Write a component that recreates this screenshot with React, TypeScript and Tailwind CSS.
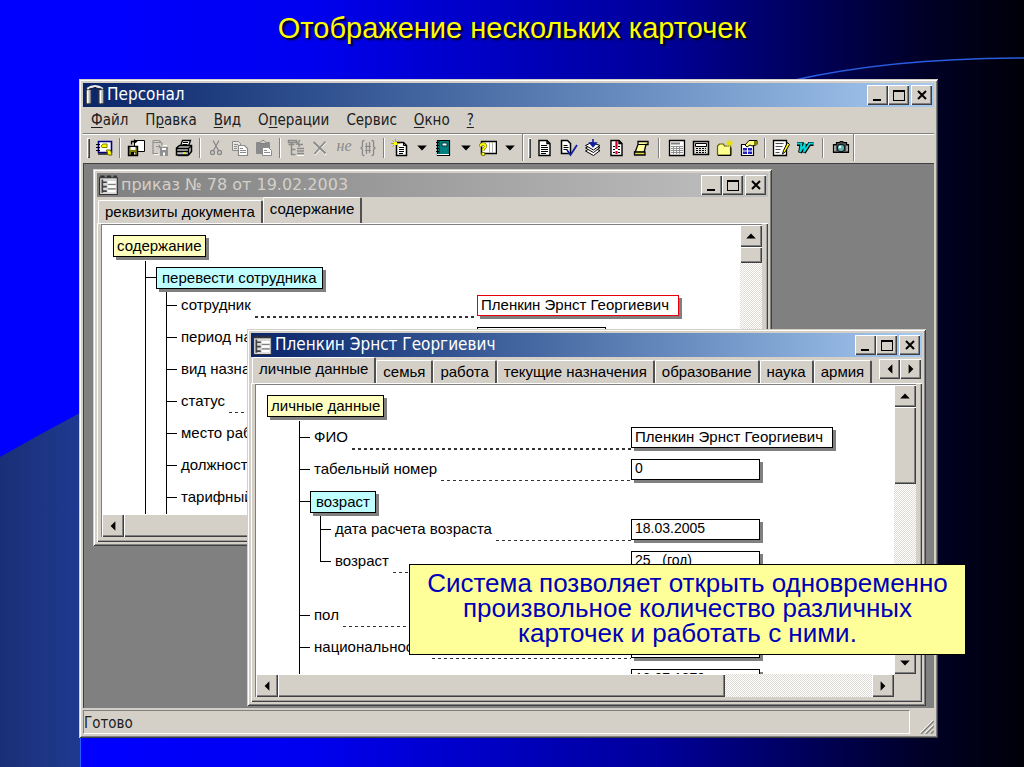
import React from "react";

const raised =
  "bg-[#d4d0c8] shadow-[inset_1px_1px_#fff,inset_-1px_-1px_#404040,inset_-2px_-2px_#808080]";
const frame =
  "bg-[#d4d0c8] shadow-[inset_1px_1px_#d4d0c8,inset_-1px_-1px_#404040,inset_2px_2px_#fff,inset_-2px_-2px_#808080]";
const dither =
  "bg-[repeating-conic-gradient(#fff_0_25%,#dedbd4_0_50%)] bg-[length:2px_2px]";
const uiFont = "font-['DejaVu_Sans_Condensed','DejaVu_Sans',sans-serif]";
const formFont = "font-['Liberation_Sans',sans-serif]";

/* ---------- icons ---------- */

type IconProps = { children: React.ReactNode; size?: string };

const Icon = ({ children, size = "size-[18px]" }: IconProps) => (
  <svg viewBox="0 0 18 18" className={`${size} shrink-0`} fill="none" aria-hidden="true">
    {children}
  </svg>
);

const Page = ({ x = 3, c = "#000" }: { x?: number; c?: string }) => (
  <path d={`M${x} 1.5h8l3 3v12h-11z M${x + 8} 1.5v3h3`} fill="#fff" stroke={c} strokeWidth="1.4" />
);

const icons: Record<string, React.ReactNode> = {
  card: (
    <>
      <path d="M3.5 2.5h13v11h-13z" fill="#fff" stroke="#000080" strokeWidth="1.6" />
      <path d="M3 15h11" stroke="#000" strokeWidth="1.300" />
      <path d="M1 5.500h4M1 8.500h4M1 11.500h4" stroke="#000" />
      <path d="M6 7l2-2h4v3.500H7z" fill="#ff0" stroke="#808000" />
      <path d="M11.500 11h4l1.500 5h-4z" fill="#ff0" stroke="#606000" />
    </>
  ),
  saveClose: (
    <>
      <path d="M7.500 1.500h10v11h-10z" fill="#fff" stroke="#000" />
      <path d="M4.500 5.500v-3h4M7 .8l2.500 1.700L7 4.200" stroke="#000" strokeWidth="1.3" />
      <path d="M1.500 7.500h9v9h-9z" fill="#808000" stroke="#000" strokeWidth="1.400" />
      <path d="M3.500 8h5v3h-5z" fill="#fff" />
      <path d="M4 13h5v3h-5z" fill="#000" />
      <path d="M7 13.500h1.500v2H7z" fill="#fff" />
    </>
  ),
  moveOff: (
    <>
      <path d="M2 3.500h7v-2M2 1.500h6l3 3v2M2 1.500v13h5" stroke="#909090" strokeWidth="1.200" />
      <path d="M3 15.500h5M12 6.500h4" stroke="#fff" />
      <path d="M9 8h8v9H9z" fill="#909090" />
      <path d="M11 9h4v2h-4zM12 13.500h2v3h-2z" fill="#fff" />
      <path d="M5 7.500h4M7.500 5.500l2 2-2 2" stroke="#909090" />
    </>
  ),
  print: (
    <>
      <path d="M5.500 7l2-5.500h8L13.500 7" fill="#fff" stroke="#000" strokeWidth="1.300" />
      <path d="M8 3.500h5M7.500 5.500h5" stroke="#000" />
      <path d="M1.500 9l3-2.500h12v6l-3 3.500H1.500z" fill="#c0c0c0" stroke="#000" strokeWidth="1.500" />
      <path d="M1.500 9.500h12v6M13.500 9.500l3-3M2 12.500h11" stroke="#000" strokeWidth="1.300" />
      <path d="M8 14h3" stroke="#ff0" strokeWidth="1.300" />
      <path d="M3 16.700h10" stroke="#000" />
    </>
  ),
  cut: (
    <>
      <path d="M6 1.500l5.500 10M12 1.500l-5.500 10" stroke="#8a8a8a" strokeWidth="1.300" />
      <circle cx="5.500" cy="13.500" r="2" stroke="#8a8a8a" strokeWidth="1.300" />
      <circle cx="12.500" cy="13.500" r="2" stroke="#8a8a8a" strokeWidth="1.300" />
    </>
  ),
  copy: (
    <>
      <path d="M1.500 2.500h6l2 2v7h-8z" fill="#e8e6e0" stroke="#8a8a8a" />
      <path d="M7.500 6.500h6l3 3v7h-9z" fill="#fff" stroke="#8a8a8a" strokeWidth="1.200" />
      <path d="M3 5.500h4M3 7.500h3M3 9.500h3M9 9.500h3M9 11.500h6M9 13.500h6" stroke="#8a8a8a" />
    </>
  ),
  paste: (
    <>
      <path d="M1.500 3.500h13v11h-13z" fill="#8a8a8a" stroke="#8a8a8a" />
      <path d="M5 3.500l2-2h2l2 2v1H5z" fill="#d4d0c8" stroke="#808080" />
      <path d="M7.500 8.500h6l3 3v5h-9z" fill="#fff" stroke="#8a8a8a" />
      <path d="M9 11.500h3M9 13.500h6" stroke="#8a8a8a" />
    </>
  ),
  treeAdd: (
    <>
      <path d="M1.500 1.500h8v2h-8zM1.500 5.500h6M4.500 3.500v12h4M4.500 10.500h4" stroke="#8a8a8a" strokeWidth="1.500" />
      <path d="M13 1l-3 4h2v3M11 5.500h5M10 9.500h7M10 12h7M10 14.500h7" stroke="#8a8a8a" strokeWidth="1.400" />
      <path d="M10 16.500h7" stroke="#fff" />
    </>
  ),
  del: (
    <>
      <path d="M3 4l12 12M15 3L4 16" stroke="#fff" strokeWidth="1.500" />
      <path d="M2.500 3l12 11.500M14.500 2.500l-11 12.500" stroke="#8a8a8a" strokeWidth="1.800" />
    </>
  ),
  braces: (
    <>
      <path d="M5.500 1.500c-3 0-2 2-2 4.500 0 2-.5 3-2 3 1.500 0 2 1 2 3 0 2.500-1 4.500 2 4.500" stroke="#8a8a8a" strokeWidth="1.300" />
      <path d="M12.500 1.500c3 0 2 2 2 4.500 0 2 .5 3 2 3-1.500 0-2 1-2 3 0 2.500 1 4.500-2 4.500" stroke="#8a8a8a" strokeWidth="1.300" />
      <path d="M7.500 4v11M10.500 3v11M6 7.500h6M6 11.500h6" stroke="#8a8a8a" strokeWidth="1.200" />
    </>
  ),
  sheet: (
    <>
      <Page />
      <path d="M5 6.500h6M5 8.500h7M5 10.500h7M5 12.500h7M5 14.500h5" stroke="#000" />
    </>
  ),
  newDoc: (
    <>
      <path d="M5.500 3.500h7l3 3v10h-10z" fill="#fff" stroke="#000" strokeWidth="1.500" />
      <path d="M12.500 3.500v3h3M8 8.500h5M8 10.500h5M8 12.500h5M8 14.500h4" stroke="#000" />
      <path d="M4.500 0v9M0 4.500h9M1.500 1.500l6 6M7.500 1.500l-6 6" stroke="#b8a800" />
      <path d="M3 3h3v3H3z" fill="#ff0" />
    </>
  ),
  book: (
    <>
      <path d="M2.500 1.500h12v15h-12z" fill="#008080" stroke="#000" strokeWidth="1.200" />
      <path d="M2 15.500h12" stroke="#fff" />
      <path d="M4.500 2v13" stroke="#004848" />
      <path d="M7 4h5v3H7z" fill="#fff" stroke="#003838" />
      <path d="M1 3.500h3M1 6.500h3M1 9.500h3M1 12.500h3" stroke="#000" />
    </>
  ),
  bookHelp: (
    <>
      <path d="M2.500 2.500h15v12h-15z" fill="#fff" stroke="#000" strokeWidth="1.500" />
      <path d="M10.500 3v11M13.500 3v11" stroke="#b0b0b0" />
      <path d="M1.500 7.500c0-3.500 5-3.500 5 0 0 1.500-2.500 1.500-2.500 4" stroke="#605800" strokeWidth="3" />
      <path d="M1.500 7.500c0-3.500 5-3.500 5 0 0 1.500-2.500 1.500-2.500 4" stroke="#ff0" strokeWidth="2" />
      <path d="M2.700 13.500h3V16.500h-3z" fill="#ff0" stroke="#605800" strokeWidth="0.700" />
    </>
  ),
  sheetCheck: (
    <>
      <path d="M1.500 1.500h6l3 3v10h-9z" fill="#fff" stroke="#000" strokeWidth="1.500" />
      <path d="M3.500 6.500h4M3.500 8.500h5M3.500 10.500h4" stroke="#000" />
      <path d="M7 11l3.500 5L17 6" stroke="#1020a0" strokeWidth="1.800" />
    </>
  ),
  layers: (
    <>
      <path d="M1.500 12l6-3.500 8.500 3-6.500 5z" fill="#fff" stroke="#000" />
      <path d="M1.500 9l6-3.500 8.500 3-6.500 5z" fill="#fff" stroke="#000" />
      <path d="M1.500 6.500l6-3 8.500 3-6.500 4.500z" fill="#fff" stroke="#000" />
      <path d="M9 0v6M6 4l3 3.500L12 4z" fill="#1020a0" stroke="#1020a0" strokeWidth="1.600" />
    </>
  ),
  sheetAlert: (
    <>
      <Page />
      <path d="M5 7.500h2M10 7.500h2M5 10.500h2M10 10.500h2M5 13.500h2M10 13.500h2" stroke="#000" />
      <path d="M8.500 2v8M8.500 12v3" stroke="#d00020" strokeWidth="2.200" />
    </>
  ),
  scroll: (
    <>
      <path d="M6 2.500h10v3h-2l-2 8H3l3-8z" fill="#ffffa0" stroke="#000" strokeWidth="1.300" />
      <path d="M2.500 13h10.500v3H2.500z" fill="#e0d840" stroke="#000" strokeWidth="1.300" />
      <path d="M6 5.500h8" stroke="#000" />
    </>
  ),
  table: (
    <>
      <path d="M1.500 1.500h15v15h-15z" fill="#fff" stroke="#000" strokeWidth="1.300" />
      <path d="M3 4.500h9" stroke="#808080" strokeWidth="2" />
      <path d="M3 7.500h12M3 9.500h12M3 11.500h12M3 13.500h12M5.500 7v8M8.500 7v8M11.500 7v8" stroke="#909090" />
    </>
  ),
  calc: (
    <>
      <path d="M1.500 2.500h15v13h-15z" fill="#e0ded8" stroke="#000" strokeWidth="1.500" />
      <path d="M3.500 4.500h11v3h-11z" fill="#fff" stroke="#000" />
      <path d="M4 9.500h10M4 11.500h10M4 13.500h10" stroke="#000" strokeDasharray="2 1" />
    </>
  ),
  folderNew: (
    <>
      <path d="M1.500 7l2-2h4l1 2h6v9h-13z" fill="#ffff90" stroke="#606000" strokeWidth="1.200" />
      <path d="M2 16.500h13v-8" stroke="#000" />
      <path d="M13.500 0v8M9.500 4h8M11 1.500l5 5M16 1.500l-5 5" stroke="#e8e000" strokeWidth="1.200" />
    </>
  ),
  formHand: (
    <>
      <path d="M1.500 5.500h12v11h-12z" fill="#fff" stroke="#000" strokeWidth="1.200" />
      <path d="M3 9h4v2.500H3zM8 9h4v2.500H8zM3 12.500h4V15H3zM8 12.500h4V15H8z" fill="#2020c0" />
      <path d="M5 6l4-4.500h8v4l-5 1.500-2-1-3 2z" fill="#ffff80" stroke="#000" />
      <path d="M14 2h3v4h-3z" fill="#808000" />
    </>
  ),
  sheetPen: (
    <>
      <path d="M1.500 1.500h13v15h-13z" fill="#fff" stroke="#000" strokeWidth="1.300" />
      <path d="M3.500 4.500h8M3.500 7.500h7M3.500 10.500h5M3.500 13.500h4" stroke="#505050" />
      <path d="M15.500 3.500l-4 8-1 3.500 3-2.500 4-7z" fill="#ff0" stroke="#000" />
    </>
  ),
  word: (
    <>
      <path d="M1 5h4.500l-1.500 8.500 5-8.500-1 8.500 5.500-8.500h4" stroke="#000" strokeWidth="3.800" />
      <path d="M1 4.500h4.500l-1.500 8.500 5-8.500-1 8.500 5.500-8.500h4" stroke="#00d8d8" strokeWidth="1.800" />
    </>
  ),
  camera: (
    <>
      <path d="M1.500 5.500h3v-2h3l1-1h2l1 1h3v2h2v8h-15z" fill="#505050" stroke="#000" strokeWidth="1.200" />
      <path d="M3 7v5M15 7v5" stroke="#c0c0c0" strokeWidth="1.500" />
      <circle cx="9" cy="9" r="3.800" fill="#60b0b0" stroke="#000" />
      <circle cx="8" cy="8" r="1.300" fill="#d0ffff" />
    </>
  ),
  app: (
    <>
      <path d="M1 4h4.500v13H1zM12.500 4H17v13h-4.500z" fill="#b8b8b8" stroke="#303030" />
      <path d="M2.500 5v11.500M14 5v11.500" stroke="#fff" strokeWidth="1.300" />
      <path d="M2 3.500c2-1.500 4-2.500 7-2.500s5 1 7 2.500" stroke="#e8e8e8" strokeWidth="2" />
      <path d="M4 3.500h2M8 2.500h2M12 3.500h3" stroke="#202020" strokeWidth="1.200" />
    </>
  ),
  cardFile: (
    <>
      <path d="M.5 2.500h16v15H.5z" fill="#d8d8d8" stroke="#303030" />
      <path d="M1 1.500h4M7 1.500h4M13 1.500h3" stroke="#303030" strokeWidth="2" />
      <path d="M3 4v12M3 6.500h4M3 10.500h4M3 14.500h4" stroke="#404040" strokeWidth="1.500" />
      <path d="M8 6.500h7M8 10.500h7M8 14.500h7" stroke="#fff" strokeWidth="2" />
      <path d="M8 8.500h7M8 12.500h7" stroke="#808080" />
    </>
  ),
};

const Arrow = ({ dir }: { dir: "up" | "down" | "left" | "right" }) => {
  const d = {
    up: "M1 7h8L5 3z",
    down: "M1 3h8L5 7z",
    left: "M7 1v8L3 5z",
    right: "M3 1v8l4-4z",
  }[dir];
  return (
    <svg viewBox="0 0 10 10" className="size-3 shrink-0" aria-hidden="true">
      <path d={d} fill="#000" />
    </svg>
  );
};

/* ---------- window parts ---------- */

type CaptionProps = { title: string; icon: string; active?: boolean };

const Caption = ({ title, icon, active = true }: CaptionProps) => (
  <div
    className={`flex h-6 shrink-0 items-center pr-0.5 pl-0.5 ${
      active
        ? "bg-linear-to-r from-[#0a246a] to-[#a6caf0] text-white"
        : "bg-linear-to-r from-[#808080] to-[#c0c0c0] text-[#d4d0c8]"
    }`}
  >
    <Icon size="size-5">{icons[icon]}</Icon>
    <h2
      className={`flex-1 truncate pl-0.5 ${
        active ? `text-[17px] ${uiFont}` : "font-['DejaVu_Sans',sans-serif] text-base"
      }`}
    >
      {title}
    </h2>
    <button aria-label="Свернуть" className={`flex h-5 w-[21px] items-end justify-center pb-1 ${raised}`}>
      <span className="mr-0.5 h-0.5 w-2 bg-black" />
    </button>
    <button aria-label="Развернуть" className={`flex h-5 w-[21px] items-center justify-center ${raised}`}>
      <span className="h-[11px] w-3 border border-t-2 border-black" />
    </button>
    <button aria-label="Закрыть" className={`ml-0.5 flex h-5 w-[21px] items-center justify-center ${raised}`}>
      <svg viewBox="0 0 10 10" className="size-2.5" aria-hidden="true">
        <path d="M1 1l8 8M9 1l-8 8" stroke="#000" strokeWidth="2" />
      </svg>
    </button>
  </div>
);

const Tab = ({ label, active }: { label: string; active?: boolean }) => (
  <button
    role="tab"
    aria-selected={!!active}
    className={`whitespace-nowrap rounded-t-xs border-t border-r-2 border-l border-t-white border-r-[#505050] border-l-white bg-[#d4d0c8] px-1.5 text-[15px] ${formFont} ${
      active ? "relative h-[26px] pb-0.5" : "h-[23px]"
    }`}
  >
    {label}
  </button>
);

const VScroll = ({ thumb }: { thumb: string }) => (
  <div className={`flex w-[22px] shrink-0 flex-col ${dither}`}>
    <button aria-label="Вверх" className={`flex h-[22px] items-center justify-center ${raised}`}>
      <Arrow dir="up" />
    </button>
    <div className={`${thumb} ${raised}`} />
    <div className="flex-1" />
    <button aria-label="Вниз" className={`flex h-[22px] items-center justify-center ${raised}`}>
      <Arrow dir="down" />
    </button>
  </div>
);

const HScroll = () => (
  <div className="flex h-[23px] shrink-0 bg-[#d4d0c8] pr-[22px]">
    <div className={`flex flex-1 ${dither}`}>
      <button aria-label="Влево" className={`flex w-[22px] items-center justify-center ${raised}`}>
        <Arrow dir="left" />
      </button>
      <div className={`w-[70%] ${raised}`} />
      <div className="flex-1" />
      <button aria-label="Вправо" className={`flex w-[22px] items-center justify-center ${raised}`}>
        <Arrow dir="right" />
      </button>
    </div>
  </div>
);

type CardProps = {
  title: string;
  active?: boolean;
  place: string;
  tabs: React.ReactNode;
  thumb: string;
  children: React.ReactNode;
};

const CardWindow = ({ title, active, place, tabs, thumb, children }: CardProps) => (
  <section className={`absolute flex h-[377px] w-[679px] flex-col p-1 ${place} ${frame}`}>
    <Caption title={title} icon="cardFile" active={active} />
    <div role="tablist" className="flex h-[26px] shrink-0 items-end pl-px">
      {tabs}
    </div>
    <div className="flex min-h-0 flex-1 flex-col pt-px pr-1.5 pb-[5px] pl-1 shadow-[inset_1px_1px_#fff,inset_-1px_-1px_#404040,inset_-2px_-2px_#a0a0a0]">
      <div className="flex min-h-0 flex-1 flex-col border-t border-l border-[#808080]">
        <div className="flex min-h-0 flex-1">
          <div className="min-w-0 flex-1 overflow-hidden bg-white pt-2.5 pl-[11px]">{children}</div>
          <VScroll thumb={thumb} />
        </div>
        <HScroll />
      </div>
    </div>
  </section>
);

/* ---------- card tree ---------- */

const Node = ({ label, color }: { label: string; color: string }) => (
  <div
    className={`flex h-[22px] w-fit items-center border border-black text-[15px] whitespace-nowrap shadow-[3px_3px_#808080] ${color} ${formFont}`}
  >
    {label}
  </div>
);

const Stub = ({ last }: { last?: boolean }) => (
  <div className="flex w-[11px] shrink-0 flex-col self-stretch">
    <div className="h-[17px] border-b border-l border-black" />
    {!last && <div className="flex-1 border-l border-black" />}
  </div>
);

type RowProps = {
  id: string;
  label?: string;
  hint?: string;
  value?: string;
  wide?: boolean;
  red?: boolean;
  last?: boolean;
};

const Row = ({ id, label, hint, value = "", wide, red, last }: RowProps) => (
  <div className={`flex h-8 ${formFont}`}>
    <Stub last={last} />
    {label && (
      <label htmlFor={id} className="flex items-center pl-1 text-[15px] whitespace-nowrap">
        {label}
      </label>
    )}
    <div
      className={`mt-[27px] ml-1 flex-1 bg-[repeating-linear-gradient(90deg,#333_0_3px,transparent_3px_6px)] ${
        wide ? "h-0.5" : "h-px"
      }`}
    />
    <div className="w-[263px] shrink-0 pt-1.5">
      <input
        id={id}
        readOnly
        aria-label={hint}
        defaultValue={value}
        className={`block h-[21px] border bg-white px-[3px] shadow-[3px_3px_#808080] outline-none ${
          wide ? "w-[202px] text-[15px]" : "w-[129px] pb-[3px] text-sm"
        } ${red ? "border-red-600" : "border-black"}`}
      />
    </div>
  </div>
);

const Group = ({ label, children }: { label: string; children: React.ReactNode }) => (
  <>
    <div className="flex h-7">
      <Stub />
      <div className="pt-1.5">
        <Node label={label} color="relative px-[5px] bg-[#c0ffff]" />
      </div>
    </div>
    <div className="border-l border-black pl-5">{children}</div>
  </>
);

const Root = ({ label, children }: { label: string; children: React.ReactNode }) => (
  <>
    <Node label={label} color="px-[3px] bg-[#ffffc0]" />
    <div className="ml-8 pt-1">{children}</div>
  </>
);

/* ---------- main window ---------- */

const menu = [
  ["", "Ф", "айл"],
  ["П", "р", "авка"],
  ["", "В", "ид"],
  ["О", "п", "ерации"],
  ["Сервис", "", ""],
  ["", "О", "кно"],
  ["", "?", ""],
];

const ToolButton = ({ icon, label }: { icon: string; label: string }) => (
  <button aria-label={label} className="flex h-6 w-6 shrink-0 items-center justify-center">
    <Icon>{icons[icon]}</Icon>
  </button>
);

const DropButton = ({ label }: { label: string }) => (
  <button aria-label={label} className="flex h-6 w-5 shrink-0 items-center justify-center">
    <Arrow dir="down" />
  </button>
);

const Sep = ({ wide }: { wide?: boolean }) => (
  <div className={`flex shrink-0 justify-center ${wide ? "w-3" : "w-2"}`}>
    <div className="h-5 border-r border-l border-r-white border-l-[#808080]" />
  </div>
);

const Grip = () => <div className={`mr-0.5 h-5 w-[3px] shrink-0 ${raised}`} />;

const Toolbar = () => (
  <div className="flex h-[30px] shrink-0 items-center border-t border-[#808080] pb-0.5 pl-1 shadow-[inset_0_1px_#fff]">
    <Grip />
    <ToolButton icon="card" label="Карточка" />
    <Sep />
    <ToolButton icon="saveClose" label="Сохранить и закрыть" />
    <ToolButton icon="moveOff" label="Переместить" />
    <ToolButton icon="print" label="Печать" />
    <Sep />
    <ToolButton icon="cut" label="Вырезать" />
    <ToolButton icon="copy" label="Копировать" />
    <ToolButton icon="paste" label="Вставить" />
    <Sep />
    <ToolButton icon="treeAdd" label="Добавить" />
    <ToolButton icon="del" label="Удалить" />
    <button className="h-6 w-6 shrink-0 pb-1 font-['Liberation_Serif',serif] text-base leading-none text-[#8a8a8a] italic">
      не
    </button>
    <ToolButton icon="braces" label="Скобки" />
    <Sep />
    <ToolButton icon="newDoc" label="Создать" />
    <DropButton label="Создать: список" />
    <ToolButton icon="book" label="Справочник" />
    <DropButton label="Справочник: список" />
    <ToolButton icon="bookHelp" label="Запрос" />
    <DropButton label="Запрос: список" />
    <div className="mr-1 ml-0.5 h-[27px] shrink-0 border-r border-l border-r-white border-l-[#808080]" />
    <Grip />
    <ToolButton icon="sheet" label="Документ" />
    <ToolButton icon="sheetCheck" label="Проверить" />
    <ToolButton icon="layers" label="Провести" />
    <ToolButton icon="sheetAlert" label="Важное" />
    <ToolButton icon="scroll" label="Журнал" />
    <Sep wide />
    <ToolButton icon="table" label="Таблица" />
    <ToolButton icon="calc" label="Калькулятор" />
    <ToolButton icon="folderNew" label="Новая папка" />
    <ToolButton icon="formHand" label="Свойства" />
    <Sep />
    <ToolButton icon="sheetPen" label="Правка документа" />
    <ToolButton icon="word" label="Экспорт" />
    <Sep wide />
    <ToolButton icon="camera" label="Снимок" />
    <div className="h-[27px] shrink-0 border-r border-l border-r-white border-l-[#808080]" />
  </div>
);

const Backdrop = () => (
  <svg
    viewBox="0 0 1024 767"
    preserveAspectRatio="none"
    className="absolute inset-0 h-full w-full"
    aria-hidden="true"
  >
    <defs>
      <linearGradient id="sky" x1="0" y1="0" x2="1" y2="0">
        <stop offset="0.1" stopColor="#0000ff" />
        <stop offset="0.3" stopColor="#0000f0" />
        <stop offset="0.65" stopColor="#000098" />
        <stop offset="0.9" stopColor="#000028" />
        <stop offset="1" stopColor="#000008" />
      </linearGradient>
      <linearGradient id="dusk" x1="0" y1="0" x2="1" y2="0">
        <stop offset="0" stopColor="#1a2f76" />
        <stop offset="1" stopColor="#1e3a90" />
      </linearGradient>
    </defs>
    <path d="M0 0h1024v767H0z" fill="url(#sky)" />
    <path d="M0 457Q40 434 80 413V767H0z" fill="url(#dusk)" />
    <path d="M80.500 738v29" stroke="#2060ff" />
    <path d="M790 81Q890 58 1024 58" fill="none" stroke="#2a5ce0" strokeWidth="1.500" />
  </svg>
);

const App = () => {
  return (
    <main className="relative flex h-screen min-h-[767px] flex-col overflow-hidden bg-[#0000ff] pb-[29px]">
      <Backdrop />
      <h1 className="relative h-[79px] shrink-0 pt-3 text-center font-['Liberation_Sans',sans-serif] text-[29px] leading-8 text-[#ffff00] [text-shadow:2px_2px_2px_#000]">
        Отображение нескольких карточек
      </h1>

      <div className={`relative mr-[86px] ml-[79px] flex min-h-0 flex-1 flex-col p-1 ${frame}`}>
        <Caption title="Персонал" icon="app" />
        <nav className={`flex h-[26px] shrink-0 items-center gap-[17px] pl-2 text-[15px] text-[#202020] ${uiFont}`}>
          {menu.map(([before, key, after]) => (
            <button key={before + key + after}>
              {before}
              <u className="underline-offset-2">{key}</u>
              {after}
            </button>
          ))}
        </nav>
        <Toolbar />

        <div className="relative min-h-0 flex-1 overflow-hidden border-t border-l border-[#404040] bg-[#808080]">
          <CardWindow
            title="приказ № 78 от 19.02.2003"
            active={false}
            place="top-[5px] left-[9px]"
            thumb="h-4"
            tabs={
              <>
                <Tab label="реквизиты документа" />
                <Tab label="содержание" active />
              </>
            }
          >
            <Root label="содержание">
              <Group label="перевести сотрудника">
                <Row id="employee" label="сотрудник" value="Пленкин Эрнст Георгиевич" wide red />
                <Row id="period" label="период назначения" />
                <Row id="kind" label="вид назначения" />
                <Row id="status" label="статус" />
                <Row id="place" label="место работы" />
                <Row id="post" label="должность" />
                <Row id="grade" label="тарифный разряд" />
                <div className="h-2 border-l border-black" />
              </Group>
            </Root>
          </CardWindow>

          <CardWindow
            title="Пленкин Эрнст Георгиевич"
            active
            place="top-[165px] left-[163px]"
            thumb="h-[77px]"
            tabs={
              <>
                <Tab label="личные данные" active />
                <Tab label="семья" />
                <Tab label="работа" />
                <Tab label="текущие назначения" />
                <Tab label="образование" />
                <Tab label="наука" />
                <Tab label="армия" />
                <div className="mr-px mb-1 ml-auto flex">
                  <button aria-label="Предыдущие вкладки" className={`flex h-5 w-[21px] items-center justify-center ${raised}`}>
                    <Arrow dir="left" />
                  </button>
                  <button aria-label="Следующие вкладки" className={`flex h-5 w-[21px] items-center justify-center ${raised}`}>
                    <Arrow dir="right" />
                  </button>
                </div>
              </>
            }
          >
            <Root label="личные данные">
              <Row id="name" label="ФИО" value="Пленкин Эрнст Георгиевич" wide />
              <Row id="number" label="табельный номер" value="0" />
              <Group label="возраст">
                <Row id="ageDate" label="дата расчета возраста" value="18.03.2005" />
                <Row id="age" label="возраст" value="25   (год)" last />
              </Group>
              <div className="h-[22px] border-l border-black" />
              <Row id="sex" label="пол" />
              <Row id="nation" label="национальность" />
              <Row id="birth" hint="дата рождения" value="18.07.1979" />
            </Root>
          </CardWindow>
        </div>

        <footer className="flex h-[26px] shrink-0 pt-0.5">
          <p
            className={`flex-1 border border-t-[#808080] border-r-white border-b-white border-l-[#808080] text-[15px] leading-6 text-[#202020] ${uiFont}`}
          >
            Готово
          </p>
          <div className="flex w-6 items-end justify-end">
            <svg viewBox="0 0 14 14" className="size-3.5" aria-hidden="true">
              <path d="M1 14L14 1M6 14l8-8M11 14l3-3" stroke="#808080" strokeWidth="1.500" />
              <path d="M0 13L13 0M5 13l8-8" stroke="#fff" strokeWidth="0.800" />
            </svg>
          </div>
        </footer>
      </div>

      <p className="absolute top-[564px] left-[409px] h-[91px] w-[557px] border border-black bg-[#ffff99] px-4 pt-1.5 text-center font-['Liberation_Sans',sans-serif] text-[26px] leading-[25px] text-[#0000b8]">
        Система позволяет открыть одновременно произвольное количество различных карточек и работать с ними.
      </p>
    </main>
  );
};

export default App;
